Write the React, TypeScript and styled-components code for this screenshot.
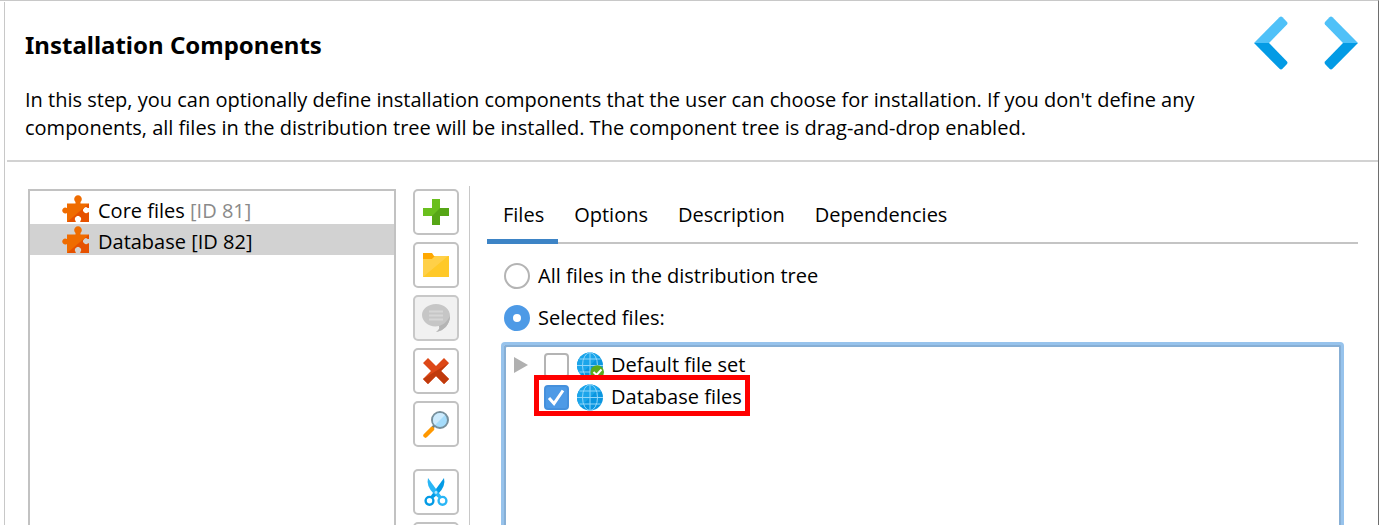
import React, { useId, useState } from "react";
import styled, { createGlobalStyle } from "styled-components";

const Global = createGlobalStyle`
  *, *::before, *::after { box-sizing: border-box; }
  body { margin: 0; background: #fff; color: #000; font: 20px/28px "Open Sans", "Noto Sans", sans-serif; }
  button, input { font: inherit; color: inherit; margin: 0; padding: 0; }
  svg { display: block; flex: none; }
`;

const Page = styled.div`
  display: flex;
  flex-direction: column;
  height: 100vh;
  overflow: hidden;
  padding-left: 4px;
  border-top: 1px solid #c8c8c8;
  border-right: 1px solid #6e6e6e;
`;

const Panel = styled.div`
  flex: 1;
  min-height: 0;
  display: flex;
  flex-direction: column;
  margin-top: 1px;
  padding-left: 2px;
  border-left: 1px solid #c8c8c8;
`;

const Header = styled.header`
  display: flex;
  justify-content: space-between;
  align-items: flex-start;
  height: 160px;
  padding: 14px 20px 0 18px;
  border-bottom: 2px solid #d2d2d2;
`;

const Title = styled.h1`
  margin: 14px 0 26px;
  font-family: "Noto Sans", "Open Sans", sans-serif;
  font-size: 24px;
  line-height: 30px;
  font-weight: 700;
`;

const Intro = styled.p`
  margin: 0;
  max-width: 1190px;
`;

const Nav = styled.nav`
  display: flex;
  gap: 36px;
`;

const NavButton = styled.button`
  border: 0;
  background: none;
  display: block;
`;

const Body = styled.div`
  flex: 1;
  min-height: 0;
  display: flex;
  padding: 24px 20px 0 21px;
`;

const ComponentTree = styled.ul`
  list-style: none;
  margin: 3px 17px 0 0;
  padding: 2px 0 0;
  width: 368px;
  border: 2px solid #c2c2c2;
  border-bottom: 0;
`;

const ComponentRow = styled.li<{ $selected?: boolean }>`
  display: flex;
  align-items: center;
  gap: 8px;
  height: 31px;
  padding-left: 32px;
  background: ${(p) => (p.$selected ? "#d2d2d2" : "transparent")};
`;

const RowText = styled.span`
  padding-top: 4px;
`;

const IdTag = styled.span<{ $selected?: boolean }>`
  color: ${(p) => (p.$selected ? "#000" : "#8a8a8a")};
`;

const Toolbar = styled.div`
  display: flex;
  flex-direction: column;
  gap: 22px;
  margin: 3px 10px 0 0;
`;

const ToolGroup = styled.div`
  display: flex;
  flex-direction: column;
  gap: 7px;
`;

const ToolButton = styled.button`
  display: flex;
  align-items: center;
  justify-content: center;
  width: 46px;
  height: 46px;
  border: 2px solid #c2c2c2;
  border-radius: 5px;
  background: #fff;
  &:disabled { background: #f1f1f1; border-color: #c8c8c8; }
`;

const Details = styled.section`
  flex: 1;
  display: flex;
  flex-direction: column;
  border-left: 1px solid #c8c8c8;
  padding-left: 17px;
`;

const Tabs = styled.div`
  display: flex;
  height: 58px;
  border-bottom: 2px solid #c4c4c4;
`;

const Tab = styled.button<{ $active?: boolean }>`
  height: 58px;
  padding: 5px 14px 0 16px;
  border: 0;
  border-bottom: 5px solid ${(p) => (p.$active ? "#3d84c6" : "transparent")};
  background: none;
`;

const Choices = styled.div`
  display: flex;
  flex-direction: column;
  gap: 14px;
  padding: 18px 0 10px 17px;
`;

const Choice = styled.label`
  display: flex;
  align-items: center;
  gap: 8px;
`;

const Radio = styled.input.attrs({ type: "radio" })`
  appearance: none;
  width: 26px;
  height: 26px;
  border: 2px solid #b4b4b4;
  border-radius: 50%;
  background: #fff;
  &:checked { border: 9px solid #4d9ae6; }
`;

const FileTree = styled.div`
  flex: 1;
  margin: 0 14px;
  padding: 4px 0 0 10px;
  border: 3px solid #97c3ec;
  border-bottom: 0;
  border-radius: 4px 4px 0 0;
  box-shadow: inset 2px 2px 0 #87afd5, inset -2px 0 0 #87afd5;
`;

const FileRow = styled.div`
  display: flex;
  align-items: center;
  gap: 16px;
  height: 32px;
`;

const Expander = styled.button<{ $hidden?: boolean }>`
  width: 14px;
  height: 16px;
  border: 0;
  background: none;
  visibility: ${(p) => (p.$hidden ? "hidden" : "visible")};
`;

const FileLabel = styled.label<{ $marked?: boolean }>`
  position: relative;
  display: flex;
  align-items: center;
  gap: 7px;
  ${(p) =>
    p.$marked &&
    `&::after {
      content: "";
      position: absolute;
      inset: -8px -8px -5px -10px;
      border: 5px solid #f00;
    }`}
`;

const CheckWrap = styled.span`
  display: grid;
  margin-right: 1px;
  & > * { grid-area: 1 / 1; }
  & > svg { pointer-events: none; }
`;

const Check = styled.input.attrs({ type: "checkbox" })`
  appearance: none;
  width: 25px;
  height: 25px;
  border: 2px solid #b4b4b4;
  border-radius: 4px;
  background: #fff;
  &:checked { background: #4d9ae6; border-color: #4590dc; }
`;

const Chevron = ({ right }: { right?: boolean }) => (
  <svg width="34" height="54" viewBox="0 0 34 54">
    <g transform={right ? "translate(34 0) scale(-1 1)" : undefined}>
      <path d="M0 27 25.500 1.200Q27 0 28.500 1.200L33 6Q34 7.200 33 8.500L15 27Z" fill="#4fc1f8" />
      <path d="M0 27 25.500 52.800Q27 54 28.500 52.800L33 48Q34 46.800 33 45.500L15 27Z" fill="#039be5" />
    </g>
  </svg>
);

const puzzle =
  "M5 8.500H13.500V7A3.800 3.800 0 1 1 18.500 7V8.500H27V13H26A3 3 0 1 0 26 17.500H27V27H18.500V26A3.200 3.200 0 1 0 13.500 26V27H5V18A3 3 0 1 1 5 13Z";

const PuzzleIcon = () => {
  const id = useId();
  return (
    <svg width="28" height="28" viewBox="0 0 28 28">
      <clipPath id={id}>
        <path d="M27.500 8V27.500H4.500Z" />
      </clipPath>
      <path d={puzzle} fill="#ef6c00" />
      <path d={puzzle} fill="#e65100" clipPath={`url(#${id})`} />
    </svg>
  );
};

const AddIcon = () => (
  <svg width="26" height="26" viewBox="0 0 26 26">
    <path d="M9 0H17V9H26V17H17V26H9V17H0V9H9Z" fill="#6abf1e" />
    <path d="M26 9V17H17V26H9V17L17 9Z" fill="#56a616" />
  </svg>
);

const FolderIcon = () => (
  <svg width="26" height="26" viewBox="0 0 26 26">
    <path d="M0 1H9L11 4H26V8H0Z" fill="#ffa800" />
    <path d="M0 7H9L12 4H26V25H0Z" fill="#ffc928" />
    <path d="M0 25V7H9L12 4H25Z" fill="#ffd048" />
  </svg>
);

const CommentIcon = () => (
  <svg width="28" height="28" viewBox="0 0 28 28">
    <path d="M14 0C22 0 28 5 28 12C28 20 22 27 14 28C17 26 18 24 17 22C8 24 0 18 0 11C0 5 6 0 14 0Z" fill="#c6c6c6" />
    <path d="M28 12C28 20 22 27 14 28C17 26 18 24 17 22C21 21 25 18 28 12Z" fill="#b4b4b4" />
    <path d="M7 7.500H21M7 11.500H21M7 15.500H21" stroke="#d6d6d6" strokeWidth="2" />
  </svg>
);

const DeleteIcon = () => (
  <svg width="26" height="26" viewBox="0 0 26 26">
    <path d="M5 0 13 8 21 0 26 5 18 13 26 21 21 26 13 18 5 26 0 21 8 13 0 5Z" fill="#dd4817" />
    <path d="M26 5 18 13 26 21 21 26 13 18 5 26 0 21Z" fill="#c03a0c" />
  </svg>
);

const SearchIcon = () => (
  <svg width="26" height="27" viewBox="0 0 26 27">
    <path d="M9.500 16.500 12 14" stroke="#607d8b" strokeWidth="2.500" />
    <path d="M2.500 24.500 9 18" stroke="#ff9800" strokeWidth="4.500" strokeLinecap="round" />
    <circle cx="17" cy="9" r="8" fill="#a5dcfb" stroke="#78909c" strokeWidth="2" />
    <path d="M12 14A7 7 0 0 1 22 4Z" fill="#cdebfd" />
  </svg>
);

const CutIcon = () => (
  <svg width="24" height="28" viewBox="0 0 24 28">
    <path d="M20 0 10.500 13 6.500 18.500 9.500 20 14.500 15.500Q22 8 20 0Z" fill="#039be5" />
    <path d="M4 0 13.500 13 17.500 18.500 14.500 20 9.500 15.500Q2 8 4 0Z" fill="#29b6f6" />
    <circle cx="5.500" cy="22.800" r="3.900" fill="none" stroke="#039be5" strokeWidth="2.400" />
    <circle cx="18.500" cy="22.800" r="3.900" fill="none" stroke="#29b6f6" strokeWidth="2.400" />
    <circle cx="12" cy="14.500" r="1.400" fill="#b3e5fc" />
  </svg>
);

const GlobeIcon = ({ ok }: { ok?: boolean }) => (
  <svg width="27" height="27" viewBox="0 0 27 27">
    <circle cx="13" cy="13.500" r="13" fill="#0a96e0" />
    <path d="M3.800 22.700A13 13 0 0 1 22.200 4.300Z" fill="#1ba5ea" />
    <g fill="none" stroke="#8fd6fa" strokeWidth="1">
      <ellipse cx="13" cy="13.500" rx="7.500" ry="13" />
      <path d="M13 .5V26.500M0 13.500H26M2.500 7H23.500M2.500 20H23.500" />
    </g>
    {ok && (
      <>
        <circle cx="20.200" cy="20" r="6.800" fill="#5aaa1e" />
        <path d="M16.500 20 19.500 23 24.500 17.500" fill="none" stroke="#fff" strokeWidth="2" />
      </>
    )}
  </svg>
);

const PasteIcon = () => (
  <svg width="24" height="26" viewBox="0 0 24 26">
    <path d="M1 3H23V26H1Z" fill="#ffca28" />
    <path d="M7 0H17V6H7Z" fill="#78909c" />
  </svg>
);

const components = [
  { name: "Core files", id: 81 },
  { name: "Database", id: 82 },
];

const tabs = ["Files", "Options", "Description", "Dependencies"];

export default function App() {
  const [tab, setTab] = useState("Files");
  const [selected, setSelected] = useState(82);
  return (
    <Page>
      <Global />
      <Panel>
        <Header>
          <div>
            <Title>Installation Components</Title>
            <Intro>
              In this step, you can optionally define installation components that the user can choose for
              installation. If you don't define any components, all files in the distribution tree will be
              installed. The component tree is drag-and-drop enabled.
            </Intro>
          </div>
          <Nav>
            <NavButton aria-label="Previous step"><Chevron /></NavButton>
            <NavButton aria-label="Next step"><Chevron right /></NavButton>
          </Nav>
        </Header>
        <Body>
          <ComponentTree>
            {components.map((c) => (
              <ComponentRow key={c.id} $selected={c.id === selected} onClick={() => setSelected(c.id)}>
                <PuzzleIcon />
                <RowText>
                  {c.name} <IdTag $selected={c.id === selected}>[ID {c.id}]</IdTag>
                </RowText>
              </ComponentRow>
            ))}
          </ComponentTree>
          <Toolbar>
            <ToolGroup>
              <ToolButton aria-label="Add component"><AddIcon /></ToolButton>
              <ToolButton aria-label="Add folder"><FolderIcon /></ToolButton>
              <ToolButton aria-label="Comment" disabled><CommentIcon /></ToolButton>
              <ToolButton aria-label="Delete"><DeleteIcon /></ToolButton>
              <ToolButton aria-label="Search"><SearchIcon /></ToolButton>
            </ToolGroup>
            <ToolGroup>
              <ToolButton aria-label="Cut"><CutIcon /></ToolButton>
              <ToolButton aria-label="Paste"><PasteIcon /></ToolButton>
            </ToolGroup>
          </Toolbar>
          <Details>
            <Tabs role="tablist">
              {tabs.map((t) => (
                <Tab key={t} role="tab" aria-selected={t === tab} $active={t === tab} onClick={() => setTab(t)}>
                  {t}
                </Tab>
              ))}
            </Tabs>
            <Choices>
              <Choice><Radio name="scope" />All files in the distribution tree</Choice>
              <Choice><Radio name="scope" defaultChecked />Selected files:</Choice>
            </Choices>
            <FileTree>
              <FileRow>
                <Expander aria-label="Expand">
                  <svg width="14" height="16" viewBox="0 0 14 16"><path d="M0 0 14 8 0 16Z" fill="#b0b0b0" /></svg>
                </Expander>
                <FileLabel>
                  <CheckWrap><Check /></CheckWrap>
                  <GlobeIcon ok />
                  Default file set
                </FileLabel>
              </FileRow>
              <FileRow>
                <Expander $hidden aria-hidden tabIndex={-1} />
                <FileLabel $marked>
                  <CheckWrap>
                    <Check defaultChecked />
                    <svg width="25" height="25" viewBox="0 0 25 25">
                      <path d="M5 13 10 18.500 19 5.500" fill="none" stroke="#fff" strokeWidth="3" />
                    </svg>
                  </CheckWrap>
                  <GlobeIcon />
                  Database files
                </FileLabel>
              </FileRow>
            </FileTree>
          </Details>
        </Body>
      </Panel>
    </Page>
  );
}
